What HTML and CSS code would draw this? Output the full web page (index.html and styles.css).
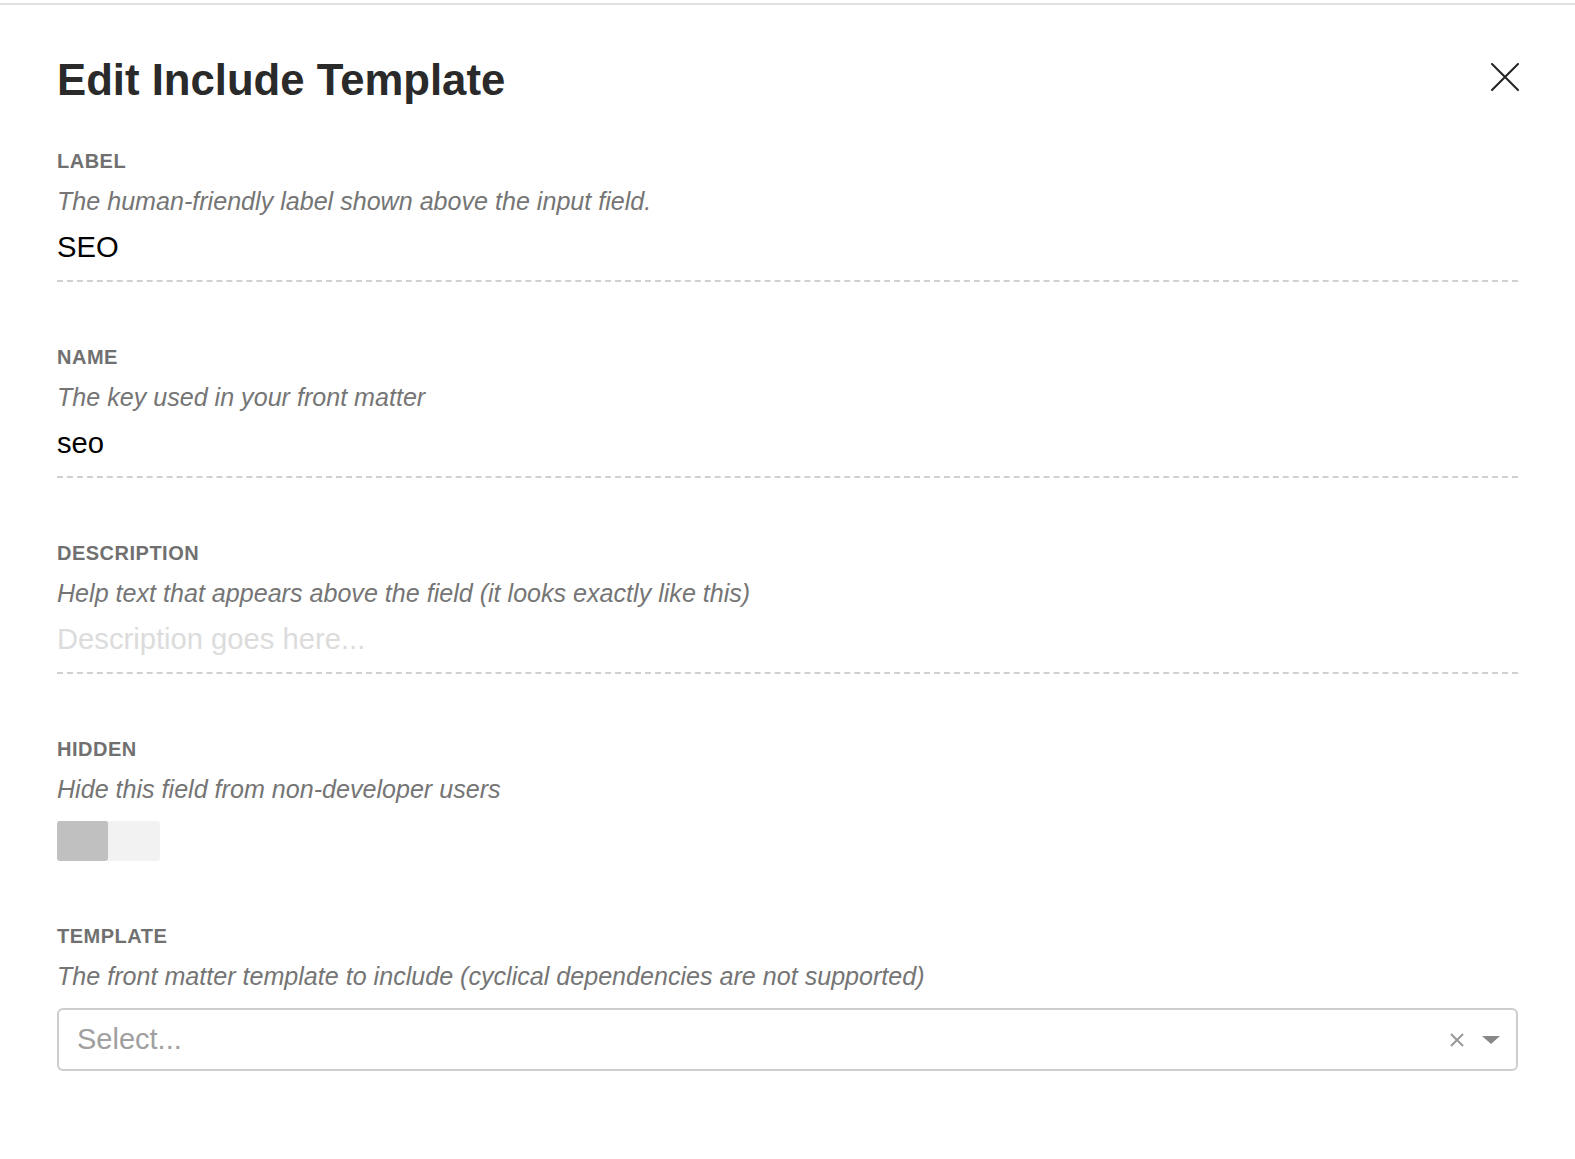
FILE: index.html
```html
<!DOCTYPE html>
<html lang="en">
<head>
    <meta charset="UTF-8">
    <meta name="viewport" content="width=device-width, initial-scale=1.0">
    <title>Edit Include Template</title>
    <link rel="stylesheet" href="styles.css">
</head>
<body>
    <div class="modal">
        <div class="modal-header">
            <h1>Edit Include Template</h1>
            <button class="close-button" aria-label="Close">
                <svg width="28" height="28" viewBox="0 0 28 28">
                    <path d="M1 1 L27 27 M27 1 L1 27" stroke="#222" stroke-width="2" stroke-linecap="round" fill="none"/>
                </svg>
            </button>
        </div>

        <div class="field">
            <label class="field-label">Label</label>
            <p class="field-help">The human-friendly label shown above the input field.</p>
            <input class="text-input" type="text" value="SEO">
        </div>

        <div class="field">
            <label class="field-label">Name</label>
            <p class="field-help">The key used in your front matter</p>
            <input class="text-input" type="text" value="seo">
        </div>

        <div class="field">
            <label class="field-label">Description</label>
            <p class="field-help">Help text that appears above the field (it looks exactly like this)</p>
            <input class="text-input" type="text" placeholder="Description goes here...">
        </div>

        <div class="field">
            <label class="field-label">Hidden</label>
            <p class="field-help">Hide this field from non-developer users</p>
            <div class="toggle">
                <span class="toggle-knob"></span>
            </div>
        </div>

        <div class="field">
            <label class="field-label">Template</label>
            <p class="field-help">The front matter template to include (cyclical dependencies are not supported)</p>
            <div class="select">
                <span class="select-placeholder">Select...</span>
                <span class="select-clear">
                    <svg width="14" height="14" viewBox="0 0 14 14">
                        <path d="M1 1 L13 13 M13 1 L1 13" stroke="#999" stroke-width="2" fill="none"/>
                    </svg>
                </span>
                <span class="select-arrow"></span>
            </div>
        </div>
    </div>
</body>
</html>
```

FILE: styles.css
```css
body {
    margin: 0;
    padding: 0;
    font-family: "Liberation Sans", Arial, sans-serif;
    background-color: #fff;
}

.modal {
    margin-top: 3px;
    border-top: 2px solid #e0e0e0;
    padding: 0 57px 80px 57px;
}

.modal-header {
    display: flex;
    justify-content: space-between;
    align-items: flex-start;
    padding-top: 50px;
    margin-bottom: 44px;
}

.modal-header h1 {
    margin: 0;
    font-size: 43.7px;
    line-height: 50px;
    font-weight: bold;
    color: #2a2a2a;
}

.close-button {
    background: none;
    border: none;
    padding: 0;
    margin-top: 8px;
    margin-right: -1px;
    cursor: pointer;
    line-height: 0;
}

.field {
    margin-bottom: 63px;
}

.field-label {
    display: block;
    font-size: 20px;
    line-height: 24px;
    font-weight: bold;
    text-transform: uppercase;
    letter-spacing: 0.5px;
    color: #707070;
}

.field-help {
    margin: 13px 0 0 0;
    font-size: 25.1px;
    line-height: 30px;
    font-style: italic;
    color: #757575;
}

.text-input {
    display: block;
    width: 100%;
    box-sizing: border-box;
    margin-top: 10px;
    padding: 4px 0 16px 0;
    border: none;
    border-bottom: 2px dashed #d0d0d0;
    font-family: inherit;
    font-size: 29.2px;
    line-height: 34px;
    color: #000;
    outline: none;
    background: transparent;
}

.text-input::placeholder {
    color: #dcdcdc;
}

.toggle {
    display: flex;
    width: 103px;
    height: 40px;
    margin-top: 17px;
    background-color: #f2f2f2;
    border-radius: 3px;
}

.toggle-knob {
    width: 51px;
    height: 40px;
    background-color: #c0c0c0;
    border-radius: 3px;
}

.select {
    display: flex;
    align-items: center;
    height: 63px;
    box-sizing: border-box;
    margin-top: 17px;
    padding: 0 16px 0 18px;
    border: 2px solid #cdcdcd;
    border-radius: 6px;
}

.select-placeholder {
    flex-grow: 1;
    font-size: 29px;
    color: #a0a0a0;
}

.select-clear {
    line-height: 0;
    margin-right: 18px;
}

.select-arrow {
    width: 0;
    height: 0;
    border-left: 9px solid transparent;
    border-right: 9px solid transparent;
    border-top: 8px solid #888;
}
```
